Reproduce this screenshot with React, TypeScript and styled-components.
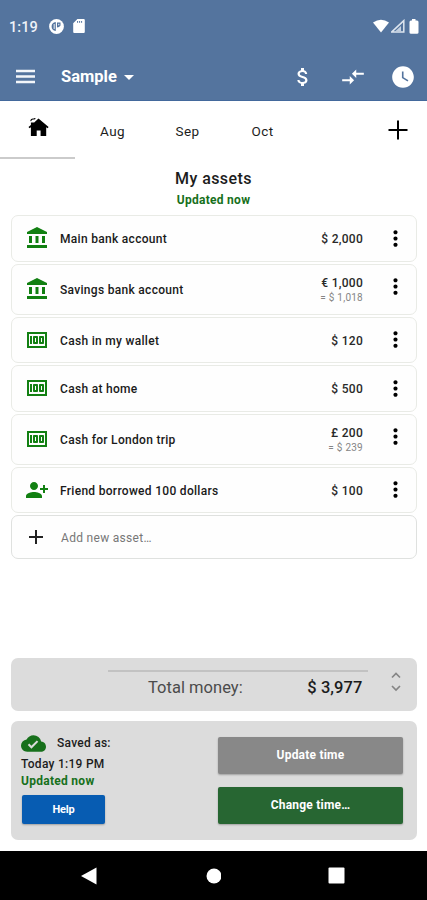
import React from "react";
import styled, { createGlobalStyle } from "styled-components";
import {
  MdAccountBalance, MdAdd, MdArrowDropDown, MdAttachMoney, MdCloudDone, MdCompareArrows,
  MdMoney, MdMoreVert, MdPersonAddAlt1, MdWatchLater,
} from "react-icons/md";

const Global = createGlobalStyle`
  * { box-sizing: border-box; }
  body { margin: 0; background: #fff; font-family: Roboto, sans-serif; color: #1c1c1c; overflow: hidden; }
  svg { display: block; flex: none; }
`;

const Screen = styled.div`
  width: 427px;
  height: 900px;
  display: flex;
  flex-direction: column;
`;

const Header = styled.header`
  height: 101px;
  flex: none;
  background: #54749e;
  border-bottom: 1px solid #43699c;
  color: #fff;
`;

const StatusBar = styled.div`
  height: 52px;
  padding: 0 6px 0 9px;
  display: flex;
  align-items: center;
`;

const Clock = styled.span`
  width: 40px;
  font-size: 14.5px;
  font-weight: 500;
  letter-spacing: 0.05px;
  color: #eef2f8;
  padding-top: 2px;
`;

const StatusIcons = styled.div<{ $right?: boolean }>`
  display: flex;
  align-items: center;
  gap: ${(p) => (p.$right ? 2 : 9)}px;
  margin-left: ${(p) => (p.$right ? "auto" : "0")};
`;

const AppBar = styled.div`
  height: 48px;
  display: flex;
  align-items: center;
  padding: 1px 11px 0 16px;
`;

const AccountName = styled.div`
  margin-left: 26px;
  display: flex;
  align-items: center;
  font-size: 16.5px;
  font-weight: 700;
  line-height: 20px;
  padding-top: 1px;
`;

const Actions = styled.div`
  margin-left: auto;
  display: grid;
  grid-template-columns: 25px 25px 26px;
  align-items: center;
  justify-items: center;
  gap: 25px;
`;

const Tabs = styled.nav`
  height: 58px;
  display: flex;
  flex: none;
`;

const Tab = styled.div<{ $active?: boolean }>`
  width: 75px;
  height: 58px;
  display: flex;
  align-items: center;
  justify-content: center;
  padding-top: ${(p) => (p.$active ? 0 : 1)}px;
  padding-bottom: ${(p) => (p.$active ? 5 : 0)}px;
  padding-left: ${(p) => (p.$active ? 2 : 0)}px;
  border-bottom: ${(p) => (p.$active ? "2px solid #cbcbcb" : "none")};
  font-size: 13.5px;
  letter-spacing: 0.35px;
`;

const AddTab = styled.div`
  margin-left: auto;
  padding: 14px 14px 0 0;
  color: #000;
`;

const Title = styled.h1`
  margin: 10px 0 0;
  text-align: center;
  font-size: 16px;
  line-height: 20px;
  font-weight: 500;
  letter-spacing: 0.42px;
`;

const Updated = styled.div`
  font-size: 12px;
  line-height: 16px;
  font-weight: 700;
  color: #17701b;
  letter-spacing: 0.28px;
`;

const Subtitle = styled.div`
  text-align: center;
  padding-top: 3px;
  height: 26px;
`;

const AssetList = styled.main`
  height: 443px;
  padding: 0 10px 0 11px;
  display: flex;
  flex-direction: column;
  gap: 2px;
  flex: none;
`;

const AssetRow = styled.div<{ $tall?: boolean; $add?: boolean }>`
  height: ${(p) => (p.$tall ? 51 : p.$add ? 44 : 46.5)}px;
  flex: none;
  border: 1px solid ${(p) => (p.$add ? "#dfe1df" : "#e9ebe6")};
  border-radius: 7px;
  display: flex;
  align-items: center;
  background: #fefefe;
`;

const AssetIcon = styled.div<{ $dark?: boolean }>`
  width: 48px;
  padding-left: ${(p) => (p.$dark ? 12 : 12.5)}px;
  color: ${(p) => (p.$dark ? "#222" : "#128012")};
`;

const AssetName = styled.div<{ $placeholder?: boolean }>`
  flex: 1;
  font-size: 12px;
  line-height: 16px;
  padding-top: 1.5px;
  padding-left: ${(p) => (p.$placeholder ? 1 : 0)}px;
  letter-spacing: 0.3px;
  font-weight: ${(p) => (p.$placeholder ? 400 : 500)};
  color: ${(p) => (p.$placeholder ? "#777" : "#1a1a1a")};
`;

const Amount = styled.div`
  text-align: right;
  padding-top: 1.5px;
  font-size: 12px;
  line-height: 16px;
  letter-spacing: 0.28px;
  font-weight: 500;
  color: #292929;
`;

const Converted = styled.div`
  font-size: 10px;
  line-height: 14px;
  font-weight: 400;
  letter-spacing: 0.25px;
  color: #858585;
`;

const RowMenu = styled.div<{ $raised?: boolean }>`
  width: 53px;
  padding: 0 0 ${(p) => (p.$raised ? 5 : 0)}px 20px;
  color: #000;
`;

const Total = styled.section`
  margin: 0 10px 0 11px;
  height: 52.5px;
  flex: none;
  border-radius: 7px;
  background: #dcdcdc;
  display: flex;
  align-items: flex-start;
  padding: 12px 0 0 97px;
`;

const TotalLine = styled.div`
  width: 260px;
  height: 40px;
  border-top: 2px solid #c2c2c2;
  display: flex;
  justify-content: space-between;
  padding: 5px 5.5px 0 40px;
  font-size: 16.5px;
  line-height: 22px;
  color: #4b4b4b;
`;

const TotalLabel = styled.span`
  letter-spacing: 0.03px;
`;

const TotalValue = styled.strong`
  font-weight: 500;
  letter-spacing: 0.08px;
  color: #1b1b1b;
`;

const Expand = styled.div`
  padding: 2px 0 0 21px;
`;

const Saved = styled.section`
  margin: 10px 10px 0 11px;
  height: 119px;
  flex: none;
  border-radius: 7px;
  background: #dcdcdc;
  display: flex;
  justify-content: space-between;
  padding: 10px 14px 0 10px;
`;

const SavedLine = styled.div`
  display: flex;
  align-items: center;
  height: 25px;
  gap: 11px;
  font-size: 12px;
  font-weight: 500;
  letter-spacing: 0.25px;
`;

const SavedTime = styled.div`
  font-size: 12px;
  line-height: 17px;
  font-weight: 500;
  letter-spacing: 0.27px;
`;

const Buttons = styled.div`
  padding-top: 6px;
  display: flex;
  flex-direction: column;
  gap: 13px;
`;

const Button = styled.button<{ $color: string; $small?: boolean }>`
  display: block;
  width: ${(p) => (p.$small ? 83 : 185)}px;
  height: ${(p) => (p.$small ? 29 : 37)}px;
  margin: ${(p) => (p.$small ? "6px 0 0 1px" : "0")};
  padding: 0;
  border: 0;
  border-radius: 2px;
  background: ${(p) => p.$color};
  box-shadow: 0 1px 2px rgba(0, 0, 0, 0.28);
  color: #fff;
  font: 700 ${(p) => (p.$small ? 11 : 12)}px Roboto, sans-serif;
  letter-spacing: ${(p) => (p.$small ? -0.15 : 0.22)}px;
`;

const NavBar = styled.footer`
  margin-top: auto;
  height: 49px;
  flex: none;
  background: #000;
  display: grid;
  grid-template-columns: 16px 16px 16px;
  gap: 107.5px;
  align-items: center;
  padding: 0 0 0 81px;
`;

const HomeIcon = () => (
  <svg width="21" height="20" viewBox="0 0 21 20" fill="#000">
    <path d="M10.5 1.6 20.6 10l-1 1.3-1.4-1V19h-5.6v-5.5H8.7V19H2.9v-8.7l-1.4 1L.5 10l2.4-2V5.4h3.3z" />
    <path d="M3 4.2C2.6 2.7 3.7 2 5 2h1c.8 0 1-.4 1-1" fill="none" stroke="#000" strokeWidth="1.1" />
  </svg>
);

const MenuIcon = () => (
  <svg width="19" height="15" viewBox="0 0 19 15" stroke="#f3f6fa" strokeWidth="2.4">
    <path d="M0 2h19M0 7.5h19M0 13h19" />
  </svg>
);

const AppBadge = () => (
  <svg width="15" height="15" viewBox="0 0 15 15">
    <circle cx="7.5" cy="7.5" r="7.4" fill="#fff" />
    <path d="M6.8 3v9C4 11.8 2.6 9.8 2.6 7.5S4 3.2 6.8 3zM8 3.4h3.5v3.2c-.9 1.3-1.9 1.8-3.5 1.8z" fill="#54749e" />
    <path d="M4.7 5h.9v5h-.9zM9.3 4.8h1v1.5h-1z" fill="#fff" />
  </svg>
);

const SdCard = () => (
  <svg width="12" height="14" viewBox="0 0 12 14">
    <path d="M4.4 0h6.1c.8 0 1.3.5 1.3 1.3v11.4c0 .8-.5 1.3-1.3 1.3h-9C.7 14 .2 13.5.2 12.7V4.2z" fill="#fff" />
    <path d="M4.6 2v1.8M6.6 2v1.8M8.6 2v1.8" stroke="#54749e" strokeWidth="1" />
  </svg>
);

const bank = <MdAccountBalance size={24} />;
const cash = <MdMoney size={24} />;

const assets = [
  { icon: bank, name: "Main bank account", amount: "$ 2,000" },
  { icon: bank, name: "Savings bank account", amount: "€ 1,000", converted: "= $ 1,018" },
  { icon: cash, name: "Cash in my wallet", amount: "$ 120" },
  { icon: cash, name: "Cash at home", amount: "$ 500" },
  { icon: cash, name: "Cash for London trip", amount: "£ 200", converted: "= $ 239" },
  { icon: <MdPersonAddAlt1 size={24} />, name: "Friend borrowed 100 dollars", amount: "$ 100" },
];

export default function App() {
  return (
    <Screen>
      <Global />
      <Header>
        <StatusBar>
          <Clock>1:19</Clock>
          <StatusIcons>
            <AppBadge />
            <SdCard />
          </StatusIcons>
          <StatusIcons $right>
            <svg width="16" height="14" viewBox="0 0 16 14"><path d="M0 3.5Q8-2 16 3.5L8 13.5z" fill="#fff" /></svg>
            <svg width="15" height="14" viewBox="0 0 15 14"><path d="M.8 12.9 12.8 1.6v11.3z" fill="none" stroke="#dde5ef" strokeWidth="1.5" /><path d="M4 12.5 10 7v5.5z" fill="#c3d0e0" /></svg>
            <svg width="13" height="15" viewBox="2 0 13 15"><path d="M6 0h3.5v1.5H11q1.5 0 1.5 1.5v10.5q0 1.300-1.5 1.300H5Q3.5 14.800 3.5 13.500V3q0-1.500 1.500-1.500h1z" fill="#fff" /></svg>
          </StatusIcons>
        </StatusBar>
        <AppBar>
          <MenuIcon />
          <AccountName>Sample<MdArrowDropDown size={24} /></AccountName>
          <Actions>
            <MdAttachMoney size={24} />
            <MdCompareArrows size={26} />
            <MdWatchLater size={26} />
          </Actions>
        </AppBar>
      </Header>
      <Tabs>
        <Tab $active><HomeIcon /></Tab>
        <Tab>Aug</Tab>
        <Tab>Sep</Tab>
        <Tab>Oct</Tab>
        <AddTab>
          <svg width="30" height="30" viewBox="0 0 30 30" stroke="currentColor" strokeWidth="2"><path d="M15 5.5v19M5.5 15h19" /></svg>
        </AddTab>
      </Tabs>
      <Title>My assets</Title>
      <Subtitle><Updated>Updated now</Updated></Subtitle>
      <AssetList>
        {assets.map((a) => (
          <AssetRow key={a.name} $tall={!!a.converted}>
            <AssetIcon>{a.icon}</AssetIcon>
            <AssetName>{a.name}</AssetName>
            <Amount>
              {a.amount}
              {a.converted && <Converted>{a.converted}</Converted>}
            </Amount>
            <RowMenu $raised={!!a.converted}><MdMoreVert size={25} /></RowMenu>
          </AssetRow>
        ))}
        <AssetRow $add>
          <AssetIcon $dark><MdAdd size={24} /></AssetIcon>
          <AssetName $placeholder>Add new asset…</AssetName>
        </AssetRow>
      </AssetList>
      <Total>
        <TotalLine>
          <TotalLabel>Total money:</TotalLabel>
          <TotalValue>$ 3,977</TotalValue>
        </TotalLine>
        <Expand>
          <svg width="14" height="20" viewBox="0 0 14 20" fill="none" stroke="#858585" strokeWidth="1.7"><path d="m3 5.5 4-4 4 4M3 14l4 4 4-4" /></svg>
        </Expand>
      </Total>
      <Saved>
        <div>
          <SavedLine><MdCloudDone size={25} color="#17701b" />Saved as:</SavedLine>
          <SavedTime>Today 1:19 PM</SavedTime>
          <Updated>Updated now</Updated>
          <Button $small $color="#075cb2">Help</Button>
        </div>
        <Buttons>
          <Button $color="#888">Update time</Button>
          <Button $color="#276632">Change time…</Button>
        </Buttons>
      </Saved>
      <NavBar>
        <svg width="16" height="18" viewBox="0 0 16 18"><path d="M15.5 .5v17L0 9z" fill="#fff" /></svg>
        <svg width="16" height="16" viewBox="0 0 16 16"><circle cx="9" cy="8" r="7.5" fill="#fff" /></svg>
        <svg width="17" height="17" viewBox="0 0 17 17"><rect x=".5" y=".5" width="16" height="16" rx="1" fill="#fff" /></svg>
      </NavBar>
    </Screen>
  );
}
